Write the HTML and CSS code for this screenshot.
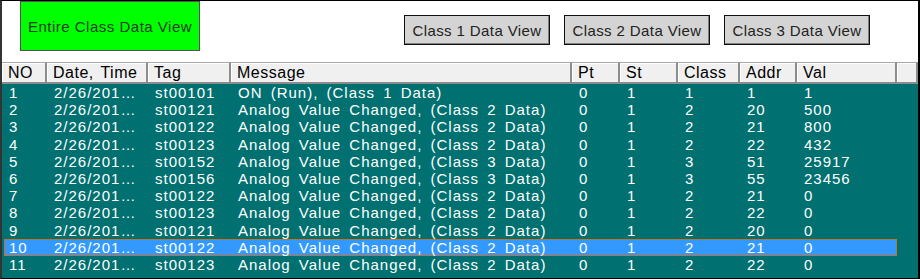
FILE: index.html
```html
<!DOCTYPE html>
<html lang="en">
<head>
<meta charset="UTF-8" />
<title>Event Data View</title>
<link rel="stylesheet" href="styles.css">
</head>
<body>

<div class="window">
  <div class="toolbar">
    <button class="btn-all">Entire Class Data View</button>
    <div class="class-btns">
      <button class="btn-class">Class 1 Data View</button>
      <button class="btn-class">Class 2 Data View</button>
      <button class="btn-class">Class 3 Data View</button>
    </div>
  </div>

  <div class="grid">
    <div class="grid-head">
      <div class="th">NO</div>
      <div class="th">Date, Time</div>
      <div class="th">Tag</div>
      <div class="th">Message</div>
      <div class="th">Pt</div>
      <div class="th">St</div>
      <div class="th">Class</div>
      <div class="th">Addr</div>
      <div class="th">Val</div>
      <div class="th"></div>
    </div>
    <div id="gridBody"></div>
  </div>
</div>

<script>
const events = [
  { tag: "st00101", msg: "ON (Run), (Class 1 Data)", cls: 1, addr: 1, val: 1 },
  { tag: "st00121", msg: "Analog Value Changed, (Class 2 Data)", cls: 2, addr: 20, val: 500 },
  { tag: "st00122", msg: "Analog Value Changed, (Class 2 Data)", cls: 2, addr: 21, val: 800 },
  { tag: "st00123", msg: "Analog Value Changed, (Class 2 Data)", cls: 2, addr: 22, val: 432 },
  { tag: "st00152", msg: "Analog Value Changed, (Class 3 Data)", cls: 3, addr: 51, val: 25917 },
  { tag: "st00156", msg: "Analog Value Changed, (Class 3 Data)", cls: 3, addr: 55, val: 23456 },
  { tag: "st00122", msg: "Analog Value Changed, (Class 2 Data)", cls: 2, addr: 21, val: 0 },
  { tag: "st00123", msg: "Analog Value Changed, (Class 2 Data)", cls: 2, addr: 22, val: 0 },
  { tag: "st00121", msg: "Analog Value Changed, (Class 2 Data)", cls: 2, addr: 20, val: 0 },
  { tag: "st00122", msg: "Analog Value Changed, (Class 2 Data)", cls: 2, addr: 21, val: 0 },
  { tag: "st00123", msg: "Analog Value Changed, (Class 2 Data)", cls: 2, addr: 22, val: 0 },
];
const selectedRow = 10;

// Build grid rows
const body = document.getElementById('gridBody');
events.forEach((ev, i) => {
  const row = document.createElement('div');
  row.className = 'grid-row' + (i + 1 === selectedRow ? ' selected' : '');
  row.innerHTML = `
    <span>${i + 1}</span>
    <span class="date">2/26/201…</span>
    <span>${ev.tag}</span>
    <span>${ev.msg}</span>
    <span>0</span>
    <span>1</span>
    <span>${ev.cls}</span>
    <span>${ev.addr}</span>
    <span>${ev.val}</span>
    <span></span>
  `;
  body.appendChild(row);
});
</script>

</body>
</html>
```

FILE: styles.css
```css
* {
  box-sizing: border-box;
}
body {
  margin: 0;
  background: #fff;
  font-family: "Liberation Sans", Arial, sans-serif;
}

.window {
  width: 920px;
  height: 279px;
  border-top: 1px solid #000;
  border-left: 2px solid #333;
  border-right: 2px solid #000;
  border-bottom: 1px solid #000;
  display: flex;
  flex-direction: column;
  background: #fff;
}

/* Top button bar */
.toolbar {
  height: 61px;
  flex-shrink: 0;
  display: flex;
  align-items: flex-start;
}
.btn-all {
  margin-left: 18px;
  width: 180px;
  height: 50px;
  background: #00ff00;
  border: 1px solid #505050;
  color: #1c3a1c;
  font-family: inherit;
  font-size: 15px;
  letter-spacing: 0.5px;
  padding: 0;
}
.class-btns {
  margin-left: auto;
  margin-right: 48px;
  margin-top: 14px;
  display: flex;
  gap: 14px;
}
.btn-class {
  width: 146px;
  height: 30px;
  background: #d4d4d4;
  border: 1px solid #111;
  box-shadow: inset -1px -1px #808080;
  color: #222;
  font-family: inherit;
  font-size: 15px;
  letter-spacing: 0.4px;
  padding: 0;
}

/* Event grid */
.grid {
  flex: 1;
  background: #007070;
  overflow: hidden;
}
.grid-head,
.grid-row {
  display: grid;
  grid-template-columns: 45px 101px 83px 341px 48px 58px 62px 57px 100px 1fr;
}
.grid-head {
  height: 22px;
  background: #f0f0f0;
}
.th {
  height: 22px;
  line-height: 20px;
  padding-left: 6px;
  font-size: 16px;
  letter-spacing: 0.5px;
  word-spacing: 2px;
  color: #000;
  border-top: 1px solid #a8a8a8;
  border-right: 2px solid #8c8c8c;
  border-bottom: 2px solid #8c8c8c;
  box-shadow: inset 1px 1px #fff;
  white-space: nowrap;
  overflow: hidden;
}
.grid-row {
  height: 17.2px;
  line-height: 17.2px;
  color: #fff;
  font-size: 15px;
  letter-spacing: 1px;
  word-spacing: 3px;
  position: relative;
}
.grid-row span {
  padding-left: 7px;
  white-space: nowrap;
  position: relative;
}
.grid-row.selected::before {
  content: "";
  position: absolute;
  left: 2px;
  right: 21px;
  top: 0;
  bottom: 0;
  background: #3399ff;
  border: 1px solid #c8702e;
}
```
